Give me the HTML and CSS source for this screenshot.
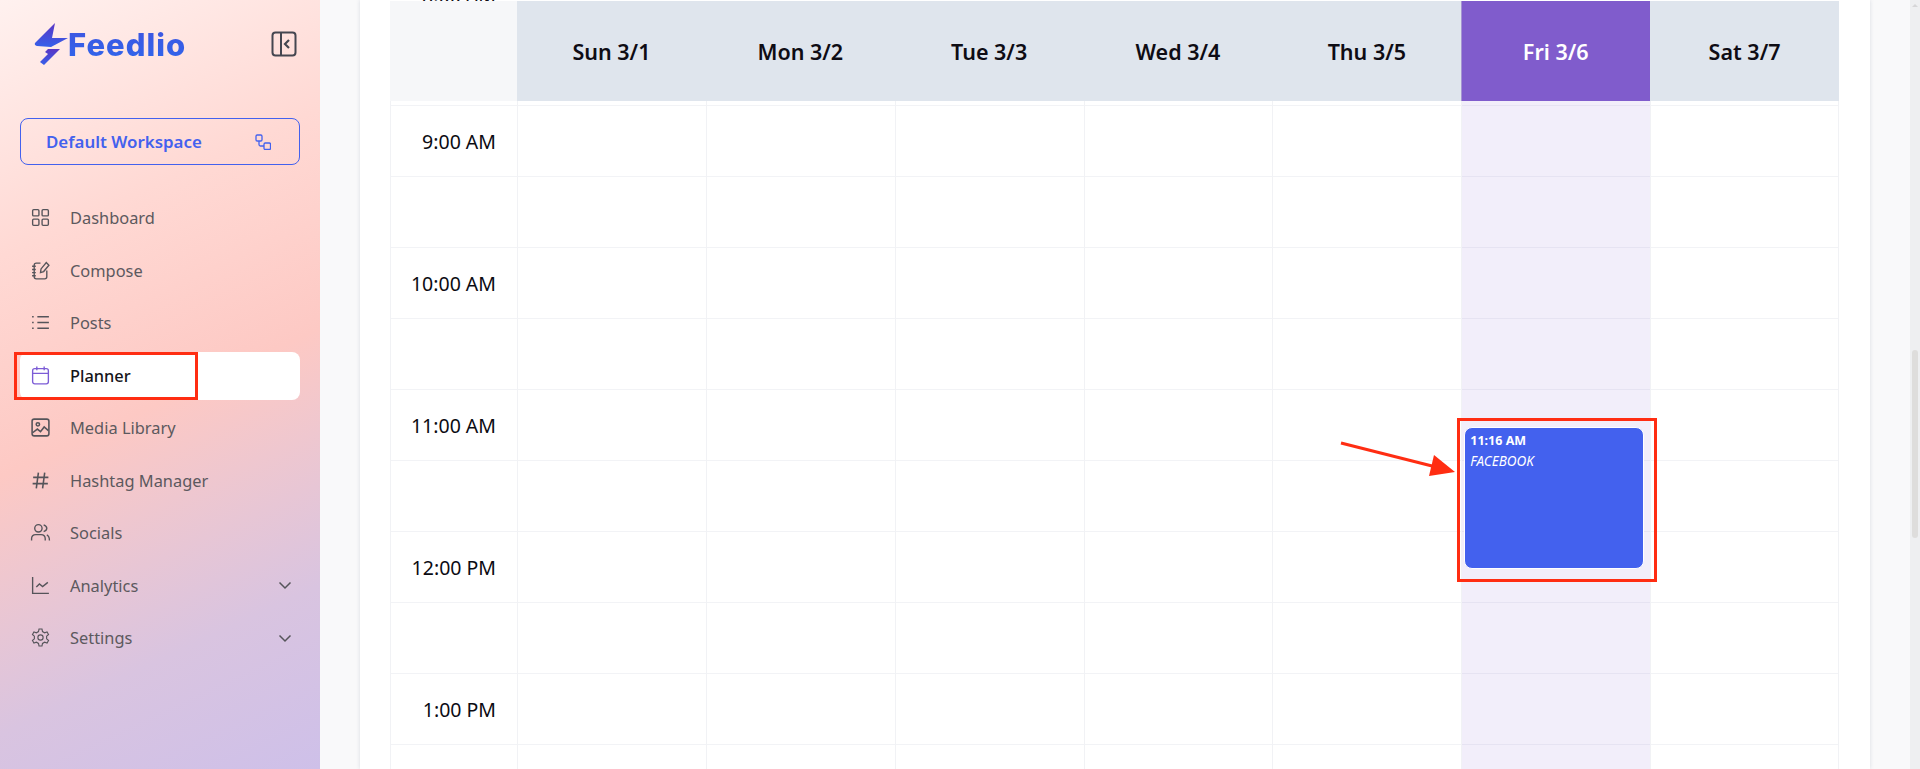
FILE: index.html
```html
<!DOCTYPE html>
<html lang="en">
<head>
  <meta charset="UTF-8">
  <meta name="viewport" content="width=device-width, initial-scale=1.0">
  <title>Feedlio - Planner</title>
  <link rel="stylesheet" href="styles.css">
</head>
<body>
  <aside class="sidebar">
    <div class="brand">
      <div class="logo">
        <svg class="logo-bolt" viewBox="0 0 34 42" width="34" height="42">
          <defs>
            <linearGradient id="boltFill" x1="0" y1="0" x2="0" y2="1">
              <stop offset="0" stop-color="#5a35c4"/>
              <stop offset="1" stop-color="#3660ea"/>
            </linearGradient>
          </defs>
          <path fill="url(#boltFill)" d="M21 0 L1 20 Q0 22 3 23 L17 24 L34 15 L18 15 Z"/>
          <path fill="url(#boltFill)" d="M14 26 L26 26 L10 42 L6 39 L14 31 L11 29 Z"/>
        </svg>
        <span class="logo-text">Feedlio</span>
      </div>
      <svg class="collapse-icon" viewBox="0 0 26 26" width="26" height="26" fill="none" stroke="#454650" stroke-width="2">
        <rect x="1.5" y="1.5" width="23" height="23" rx="3"/>
        <path d="M10 1.5 V24.5"/>
        <path d="M18 9 L14 13 L18 17" stroke-width="2.2"/>
      </svg>
    </div>

    <button class="workspace">
      <span>Default Workspace</span>
      <svg viewBox="0 0 16 16" width="16" height="16" fill="none" stroke="#4361ee" stroke-width="1.3">
        <rect x="1" y="1" width="6" height="6" rx="1.2"/>
        <rect x="9" y="9" width="6.5" height="6.5" rx="1.2"/>
        <path d="M4 7 V10.5 Q4 12 5.5 12 H9"/>
      </svg>
    </button>

    <nav class="nav">
      <a class="nav-item">
        <svg class="nav-icon" viewBox="0 0 20 20"><rect x="2.5" y="2.5" width="6" height="6" rx="1"/><rect x="11.5" y="2.5" width="6" height="6" rx="1"/><rect x="2.5" y="11.5" width="6" height="6" rx="1"/><rect x="11.5" y="11.5" width="6" height="6" rx="1"/></svg>
        <span>Dashboard</span>
      </a>
      <a class="nav-item">
        <svg class="nav-icon" viewBox="0 0 20 20"><path d="M10 3 H6 Q4 3 4 5 V16 Q4 18 6 18 H14 Q16 18 16 16 V10"/><path d="M10 12 L10.5 8.5 L15.5 2.5 L18 5 L13 11 Z"/><path d="M2 6 H5.5 M2 9 H5.5 M2 12 H5.5 M2 15 H5.5"/></svg>
        <span>Compose</span>
      </a>
      <a class="nav-item">
        <svg class="nav-icon" viewBox="0 0 20 20"><path d="M7 4.5 H18 M7 10 H18 M7 15.5 H18"/><path d="M2 4.5 H3.5 M2 10 H3.5 M2 15.5 H3.5"/></svg>
        <span>Posts</span>
      </a>
      <a class="nav-item nav-item-active">
        <svg class="nav-icon" viewBox="0 0 20 20"><rect x="2.5" y="3.5" width="15" height="14.5" rx="2"/><path d="M2.5 8 H17.5 M6.5 1.5 V5 M13.5 1.5 V5"/></svg>
        <span>Planner</span>
      </a>
      <a class="nav-item">
        <svg class="nav-icon nav-icon-bold" viewBox="0 0 20 20"><rect x="2" y="2" width="16" height="16" rx="2"/><circle cx="7.5" cy="7" r="1.6"/><path d="M2.5 15 L7 11.5 L10 14 L13.5 9.5 L17.5 13"/></svg>
        <span>Media Library</span>
      </a>
      <a class="nav-item">
        <svg class="nav-icon nav-icon-bold" viewBox="0 0 20 20"><path d="M8 2.5 L6 17.5 M14 2.5 L12 17.5 M3 7 H17.5 M2.5 13 H17"/></svg>
        <span>Hashtag Manager</span>
      </a>
      <a class="nav-item">
        <svg class="nav-icon" viewBox="0 0 20 20"><circle cx="8" cy="6" r="3.5"/><path d="M1.5 17.5 V16 Q1.5 12 5.5 12 H10.5 Q14.5 12 14.5 16 V17.5"/><path d="M13 2.8 Q16 4 16 6 Q16 8.2 13 9.2"/><path d="M16 12.3 Q18.5 13.4 18.5 17.5"/></svg>
        <span>Socials</span>
      </a>
      <a class="nav-item">
        <svg class="nav-icon" viewBox="0 0 20 20"><path d="M2.5 2 V17.5 H18"/><path d="M6 11.5 L9 8.5 L12 11 L17 7"/></svg>
        <span>Analytics</span>
        <svg class="chevron" viewBox="0 0 14 14" width="14" height="14"><path d="M1.5 4.5 L7 10 L12.5 4.5"/></svg>
      </a>
      <a class="nav-item">
        <svg class="nav-icon" viewBox="0 0 24 24"><path d="M10.3 2.3 H13.7 L14.3 5.2 L16.7 6.6 L19.5 5.6 L21.2 8.6 L19 10.5 V13.5 L21.2 15.4 L19.5 18.4 L16.7 17.4 L14.3 18.8 L13.7 21.7 H10.3 L9.7 18.8 L7.3 17.4 L4.5 18.4 L2.8 15.4 L5 13.5 V10.5 L2.8 8.6 L4.5 5.6 L7.3 6.6 L9.7 5.2 Z"/><circle cx="12" cy="12" r="3"/></svg>
        <span>Settings</span>
        <svg class="chevron" viewBox="0 0 14 14" width="14" height="14"><path d="M1.5 4.5 L7 10 L12.5 4.5"/></svg>
      </a>
    </nav>
  </aside>

  <main class="main">
    <section class="card">
      <div class="peek"><span>8:00 AM</span></div>
      <div class="calendar">
        <div class="head head-time"></div>
        <div class="head">Sun 3/1</div>
        <div class="head">Mon 3/2</div>
        <div class="head">Tue 3/3</div>
        <div class="head">Wed 3/4</div>
        <div class="head">Thu 3/5</div>
        <div class="head head-today">Fri 3/6</div>
        <div class="head">Sat 3/7</div>
      </div>
      <div class="body-wrap">
        <div class="time-col">
          <div class="slot"><span>9:00 AM</span></div><div class="slot"></div>
          <div class="slot"><span>10:00 AM</span></div><div class="slot"></div>
          <div class="slot"><span>11:00 AM</span></div><div class="slot"></div>
          <div class="slot"><span>12:00 PM</span></div><div class="slot"></div>
          <div class="slot"><span>1:00 PM</span></div><div class="slot"></div>
        </div>
        <div class="day-col"></div>
        <div class="day-col"></div>
        <div class="day-col"></div>
        <div class="day-col"></div>
        <div class="day-col"></div>
        <div class="day-col day-col-today">
          <div class="event">
            <div class="event-time">11:16 AM</div>
            <div class="event-name">FACEBOOK</div>
          </div>
        </div>
        <div class="day-col"></div>
      </div>
    </section>
  </main>

  <div class="scrollbar">
    <div class="scroll-arrow"></div>
    <div class="scroll-thumb"></div>
  </div>

  <!-- red annotations drawn on top of the screenshot -->
  <div class="mark mark-planner"></div>
  <div class="mark mark-event"></div>
  <svg class="mark-arrow" viewBox="0 0 130 50" width="130" height="50">
    <path d="M1 8 L100 33" stroke="#ff2d12" stroke-width="3" fill="none"/>
    <path d="M115 37 L89 41 L94 20 Z" fill="#ff2d12"/>
  </svg>
</body>
</html>
```

FILE: styles.css
```css
* { box-sizing: border-box; }
html, body { height: 100%; }
body {
  margin: 0;
  display: flex;
  height: 769px;
  overflow: hidden;
  background: #f9f9fa;
  font-family: "Noto Sans", "Open Sans", sans-serif;
  color: #0b0b12;
  position: relative;
}

/* sidebar */
.sidebar {
  flex: 0 0 320px;
  padding: 21px 20px 0;
  background: linear-gradient(155deg, #fff1ef 0%, #ffd9d4 28%, #fdc9c4 52%, #d9c4e0 80%, #cec0e9 100%);
}
.brand {
  display: flex;
  align-items: center;
  justify-content: space-between;
  height: 46px;
  padding: 0 3px 0 14px;
  margin-bottom: 51px;
}
.logo { display: flex; align-items: center; }
.logo-bolt { flex: none; }
.logo-text {
  font-family: "Inter", sans-serif;
  font-weight: 800;
  font-size: 31px;
  letter-spacing: 1px;
  background: linear-gradient(180deg, #3f55e0, #2f66ec);
  -webkit-background-clip: text;
  background-clip: text;
  color: transparent;
}
.workspace {
  display: flex;
  align-items: center;
  justify-content: space-between;
  width: 280px;
  height: 47px;
  padding: 0 28px 0 25px;
  border: 1px solid #4361ee;
  border-radius: 8px;
  background: transparent;
  color: #4361ee;
  font-family: inherit;
  font-size: 16.9px;
  font-weight: 600;
  margin-bottom: 29px;
}
.nav { display: flex; flex-direction: column; gap: 4.5px; }
.nav-item {
  display: flex;
  align-items: center;
  height: 48px;
  padding: 0 8px 1px 10px;
  border-radius: 8px;
  font-size: 16.4px;
  color: #5c595e;
}
.nav-item span { margin-left: 19px; flex: 1; }
.nav-icon {
  flex: none;
  width: 21px;
  height: 21px;
  fill: none;
  stroke: #55545a;
  stroke-width: 1.3;
}
.nav-icon-bold { stroke-width: 1.5; }
.chevron { fill: none; stroke: #55545a; stroke-width: 1.5; }
.nav-item-active { background: #fff; color: #15141a; font-weight: 500; }
.nav-item-active .nav-icon { stroke: #7c5cd6; }

/* main area */
.main {
  flex: 1;
  min-width: 0;
  padding: 0 40px;
}
.card {
  height: 769px;
  padding: 0 31px 0 30px;
  background: #fff;
  box-shadow: 0 0 4px rgba(30, 40, 80, .14);
}
.peek {
  height: 1px;
  width: 127px;
  overflow: hidden;
  display: flex;
  align-items: flex-end;
  justify-content: flex-end;
  padding-right: 21px;
  font-size: 19.5px;
  line-height: 1;
}
.peek span { display: block; margin-bottom: -4px; }
.calendar, .body-wrap {
  display: grid;
  grid-template-columns: 127px repeat(7, 1fr);
}
.calendar { height: 100px; }
.head {
  display: flex;
  align-items: center;
  justify-content: center;
  background: #dfe5ed;
  font-size: 21.5px;
  font-weight: 600;
  color: #0e0c14;
}
.head-time { background: #f6f7f9; }
.head-today { background: #805ccc; color: #fff; box-shadow: inset 1px 0 0 #a594d2; }

/* grid of half hours */
.body-wrap {
  height: 668px;
  overflow: hidden;
  box-shadow: inset 1px 0 0 #f1f2f5, inset -1px 0 0 #f1f2f5;
  background-image: repeating-linear-gradient(to bottom, #f2f3f6 0, #f2f3f6 1px, transparent 1px, transparent 71px);
  background-position: 0 4px;
}
.time-col { padding-top: 5px; }
.slot {
  height: 71px;
  display: flex;
  align-items: center;
  justify-content: flex-end;
  padding-right: 21px;
  font-size: 19.5px;
}
.day-col { position: relative; border-left: 1px solid #f1f2f5; }
.day-col-today { background: rgba(128, 92, 204, .105); }
.event {
  position: absolute;
  left: 2px;
  right: 6px;
  top: 326px;
  height: 142px;
  padding: 5px 5px;
  background: #4361ee;
  border: 1px solid #fff;
  border-radius: 8px;
  color: #fff;
}
.event-time { font-weight: 700; font-size: 12.5px; line-height: 16px; }
.event-name { font-style: italic; font-size: 13.5px; margin-top: 4px; line-height: 16px; }

/* fake window scrollbar */
.scrollbar {
  flex: 0 0 10px;
  background: #eeeff1;
  position: relative;
}
.scroll-arrow {
  position: absolute;
  top: 4px;
  left: 2px;
  border-left: 3px solid transparent;
  border-right: 3px solid transparent;
  border-bottom: 3px solid #d6d6d8;
}
.scroll-thumb {
  position: absolute;
  top: 350px;
  left: 2px;
  width: 6px;
  height: 188px;
  background: #dedddc;
  border-radius: 3px;
}

/* annotations */
.mark {
  position: absolute;
  border: 3px solid #ff2d12;
}
.mark-planner { left: 14px; top: 352px; width: 184px; height: 48px; }
.mark-event { left: 1457px; top: 418px; width: 200px; height: 164px; }
.mark-arrow { position: absolute; left: 1340px; top: 435px; }
```
